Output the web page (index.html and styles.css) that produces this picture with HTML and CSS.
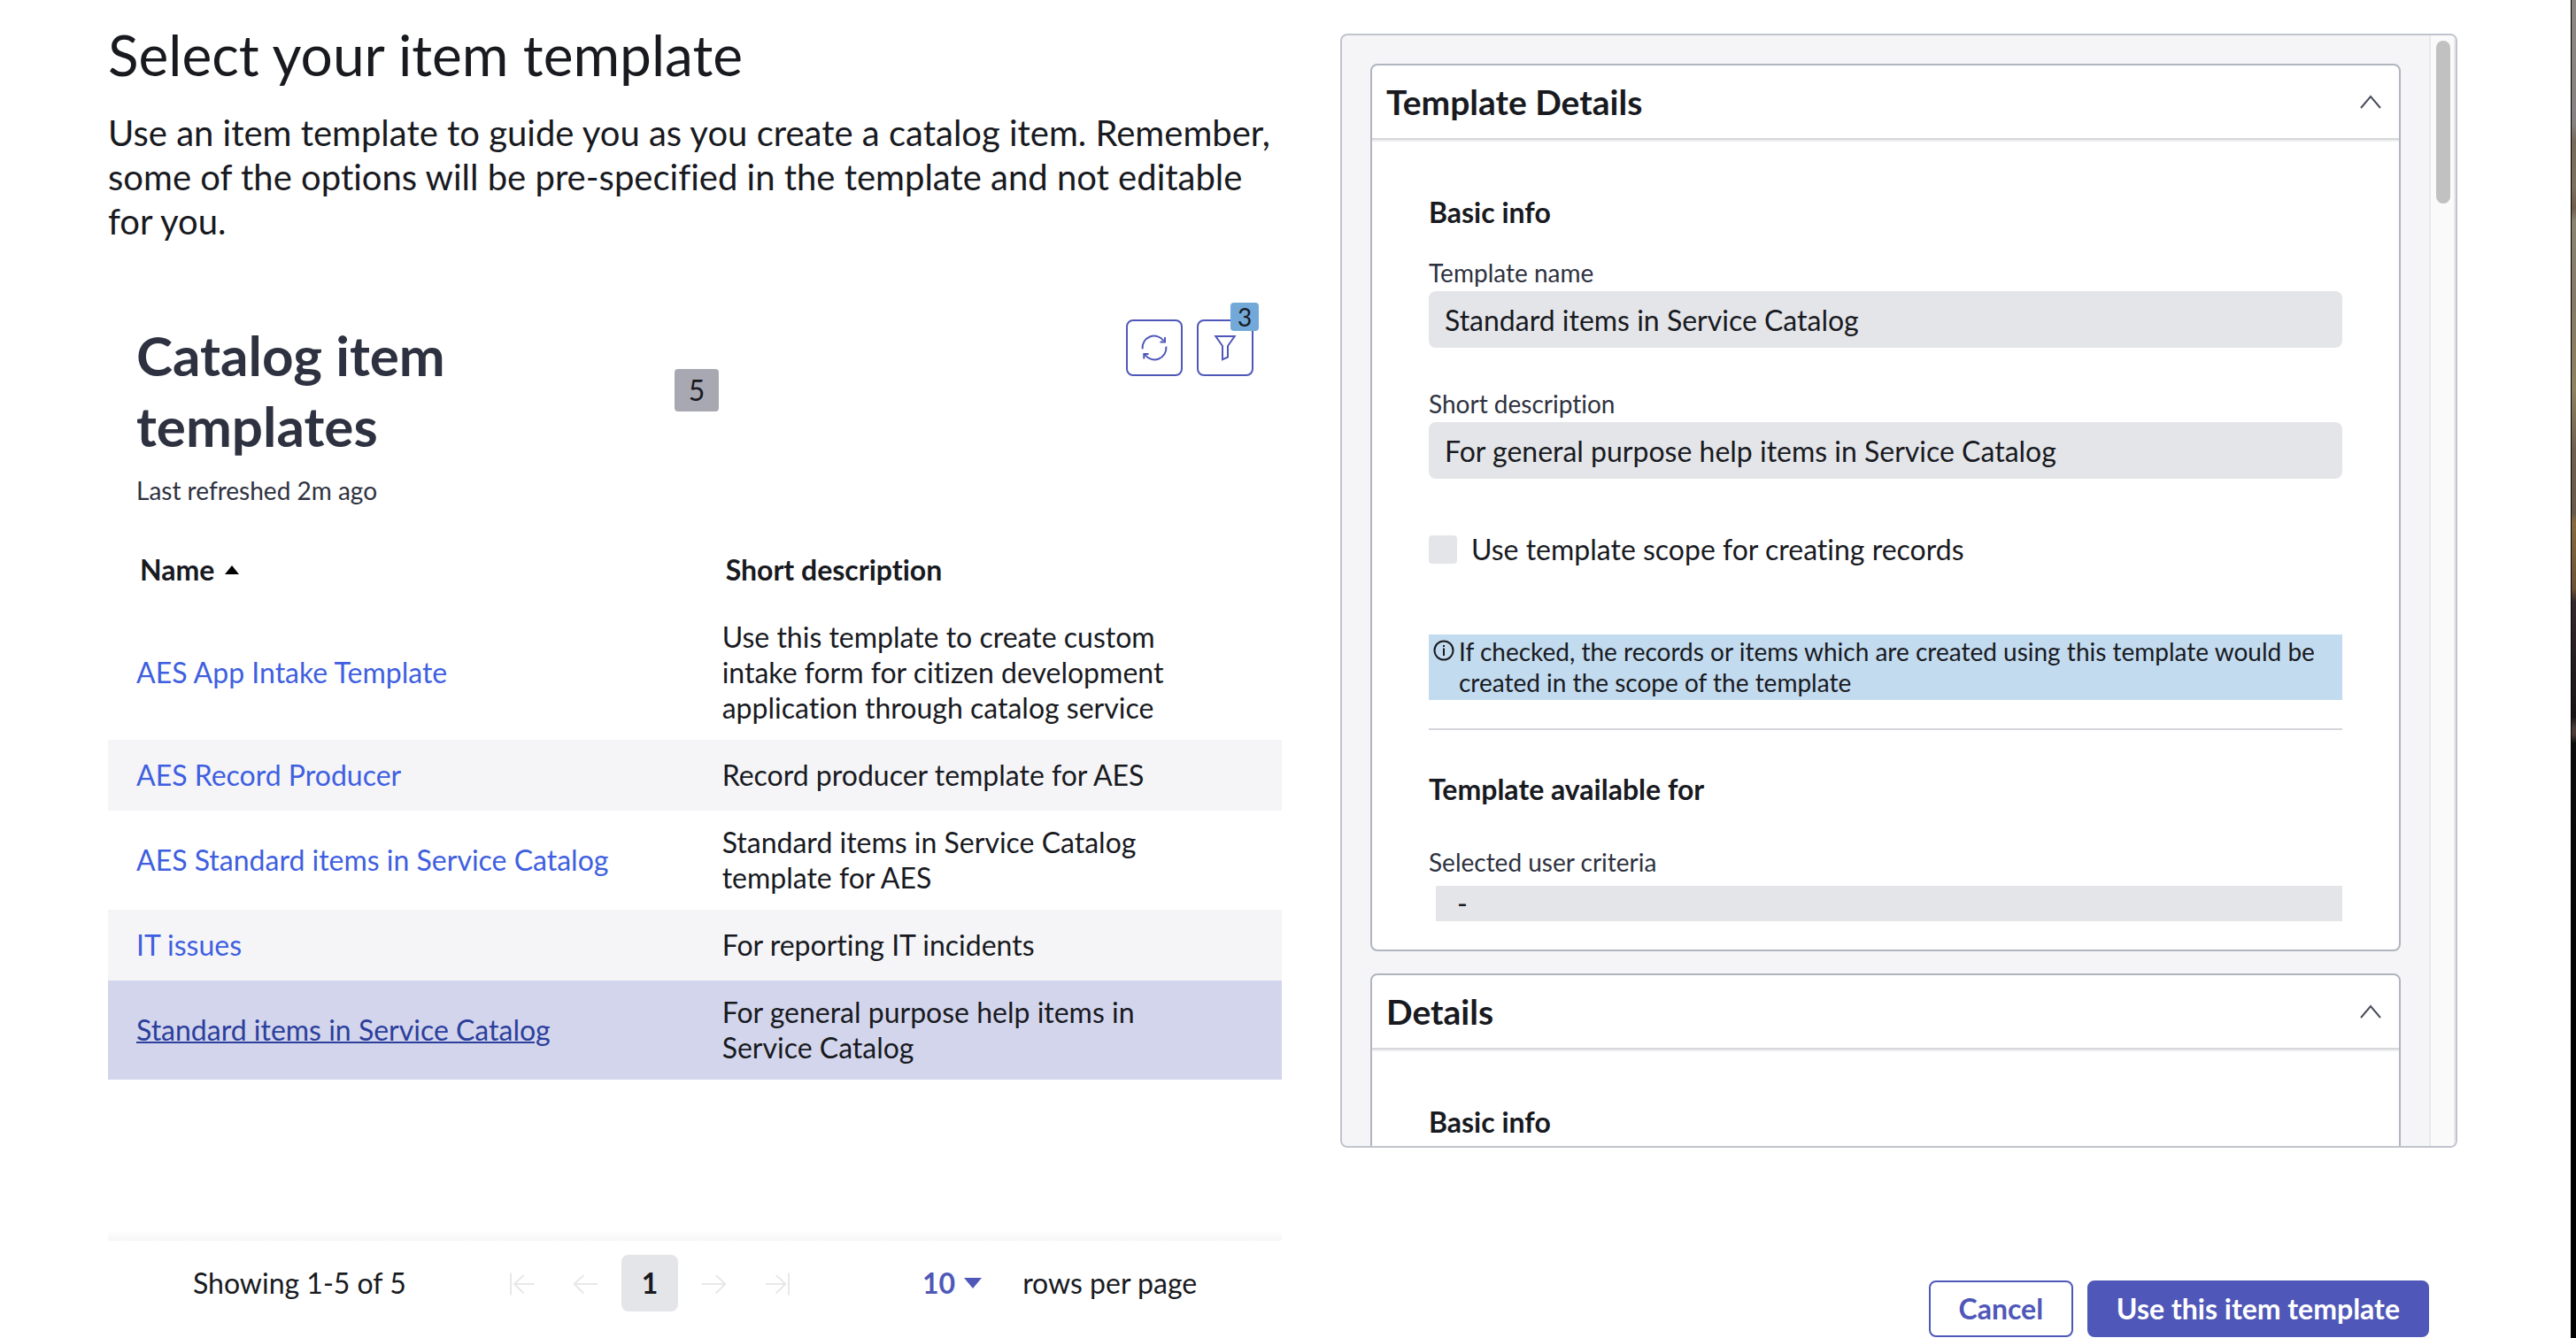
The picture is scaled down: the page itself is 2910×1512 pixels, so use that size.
FILE: index.html
```html
<!DOCTYPE html>
<html lang="en">
<head>
<meta charset="utf-8">
<title>Select your item template</title>
<link rel="stylesheet" href="styles.css">
</head>
<body>
<div class="page">
  <main class="columns">
    <section class="picker">
      <h1 class="page-title">Select your item template</h1>
      <p class="intro">Use an item template to guide you as you create a catalog item. Remember, some of the options will be pre-specified in the template and not editable for you.</p>

      <div class="list-head">
        <div class="list-heading">
          <h2 class="list-title">Catalog item templates</h2>
          <p class="refreshed">Last refreshed 2m ago</p>
        </div>
        <span class="count">5</span>
        <div class="tools">
          <button class="tool" type="button" aria-label="Refresh">
            <svg class="icon" viewBox="0 0 32 32"><path d="M2.600 17.300A13.300 13.300 0 0 1 26.500 8M28 4V9.500H22.500M29.400 14.700A13.300 13.300 0 0 1 5.500 24M4.300 28.500V23H9.500"/></svg>
          </button>
          <button class="tool" type="button" aria-label="Filter">
            <svg class="icon" viewBox="0 0 32 32"><path d="M5.300 3H26.700L19 14V26.500L13 29.300V14Z"/></svg>
            <span class="tool-badge">3</span>
          </button>
        </div>
      </div>

      <table class="templates">
        <thead>
          <tr>
            <th scope="col"><span class="sort">Name <svg class="sort-icon" viewBox="0 0 16 10"><path d="M8 0 16 10H0Z"/></svg></span></th>
            <th scope="col">Short description</th>
          </tr>
        </thead>
        <tbody>
          <tr><td><a href="#">AES App Intake Template</a></td><td>Use this template to create custom intake form for citizen development application through catalog service</td></tr>
          <tr><td><a href="#">AES Record Producer</a></td><td>Record producer template for AES</td></tr>
          <tr><td><a href="#">AES Standard items in Service Catalog</a></td><td>Standard items in Service Catalog template for AES</td></tr>
          <tr><td><a href="#">IT issues</a></td><td>For reporting IT incidents</td></tr>
          <tr class="selected"><td><a href="#">Standard items in Service Catalog</a></td><td>For general purpose help items in Service Catalog</td></tr>
        </tbody>
      </table>

      <div class="pager">
        <span class="showing">Showing 1-5 of 5</span>
        <nav class="pages" aria-label="Pages">
          <button class="page-button" type="button" disabled aria-label="First page"><svg class="icon" viewBox="0 0 32 32"><path d="M3 4.500V29.500M29.300 17H7M17.700 7 7 17 17.700 27.500"/></svg></button>
          <button class="page-button" type="button" disabled aria-label="Previous page"><svg class="icon" viewBox="0 0 32 32"><path d="M29 17H2.500M13.300 7 2.700 17 13.300 27.500"/></svg></button>
          <button class="page-button current" type="button">1</button>
          <button class="page-button" type="button" disabled aria-label="Next page"><svg class="icon" viewBox="0 0 32 32"><path d="M2.700 17H29.300M18.700 7 29.300 17 18.700 27.500"/></svg></button>
          <button class="page-button" type="button" disabled aria-label="Last page"><svg class="icon" viewBox="0 0 32 32"><path d="M29 4.500V29.500M3 17H25M14.700 7 25.300 17 14.700 27.500"/></svg></button>
        </nav>
        <div class="rows">
          <button class="rows-button" type="button">10 <svg class="rows-icon" viewBox="0 0 20 12"><path d="M0 0H20L10 12Z"/></svg></button>
          <span>rows per page</span>
        </div>
      </div>
    </section>

    <section class="side">
      <div class="preview">
        <div class="preview-content">
          <article class="card">
            <header class="card-head">
              <h2 class="card-title">Template Details</h2>
              <button class="collapse" type="button" aria-label="Collapse Template Details"><svg class="chevron" viewBox="0 0 24 16"><path d="M1 15 12 2 23 15"/></svg></button>
            </header>
            <div class="card-body">
              <h3 class="group-title">Basic info</h3>
              <div class="field">
                <label for="template-name">Template name</label>
                <input class="value" id="template-name" type="text" value="Standard items in Service Catalog" readonly>
              </div>
              <div class="field">
                <label for="short-description">Short description</label>
                <input class="value" id="short-description" type="text" value="For general purpose help items in Service Catalog" readonly>
              </div>
              <label class="check"><input class="box" type="checkbox" disabled>Use template scope for creating records</label>
              <p class="note">
                <svg class="note-icon" viewBox="0 0 24 24"><circle cx="12" cy="12" r="10.500"/><path d="M12 9.500V18M12 6V8"/></svg>
                <span>If checked, the records or items which are created using this template would be created in the scope of the template</span>
              </p>
              <hr class="rule">
              <h3 class="group-title">Template available for</h3>
              <div class="criteria">
                <span class="criteria-label">Selected user criteria</span>
                <div class="criteria-value">-</div>
              </div>
            </div>
          </article>
          <article class="card">
            <header class="card-head">
              <h2 class="card-title">Details</h2>
              <button class="collapse" type="button" aria-label="Collapse Details"><svg class="chevron" viewBox="0 0 24 16"><path d="M1 15 12 2 23 15"/></svg></button>
            </header>
            <div class="card-body">
              <h3 class="group-title">Basic info</h3>
            </div>
          </article>
        </div>
        <div class="track"><div class="thumb"></div></div>
      </div>
      <div class="actions">
        <button class="action" type="button">Cancel</button>
        <button class="action primary" type="button">Use this item template</button>
      </div>
    </section>
  </main>
  <div class="backdrop"></div>
</div>
</body>
</html>
```
FILE: styles.css
```css
* { box-sizing: border-box; }

body {
  margin: 0;
  overflow: hidden;
  background: #fff;
  color: #181a1f;
  font: 32px/40px Lato, sans-serif;
  font-variant-ligatures: none;
}

h1, h2, h3, p { margin: 0; }

button, input { font: inherit; color: inherit; font-variant-ligatures: none; }

button { padding: 0; border: 0; background: none; }

.page {
  display: flex;
  min-height: 100vh;
}

.columns {
  flex: 1;
  display: grid;
  grid-template-columns: minmax(0, 1326fr) minmax(0, 1262fr);
  column-gap: 66px;
  padding: 0 128px 0 122px;
}

.backdrop {
  width: 6px;
  border-left: 1px solid #000;
  background: linear-gradient(#8c8684 0, #868080 140px, #75695a 160px, #7c705f 210px, #6e5e4c 235px, #8a8272 250px, #857a66 340px, #8c8160 440px, #6d604f 510px, #675a4c 580px, #86693f 590px, #6b5236 665px, #33292b 680px, #171314 810px, #4a3b37 822px, #4a3b37 830px, #0b0d0d 840px, #000 1200px);
}

/* Template list */
.picker { display: flex; flex-direction: column; }

.page-title {
  padding-top: 22px;
  font-size: 64px;
  line-height: 80px;
  font-weight: 400;
}

.intro {
  padding-top: 23px;
  font-size: 40px;
  line-height: 50px;
}

.list-head {
  display: flex;
  padding: 86px 32px 0;
}

.list-heading { width: 608px; }

.list-title {
  max-width: 400px;
  color: #2e3240;
  font-size: 62px;
  line-height: 80px;
}

.refreshed {
  padding-top: 16px;
  color: #2e3240;
  font-size: 28px;
  line-height: 35px;
}

.count {
  align-self: flex-start;
  width: 50px;
  margin-top: 56px;
  border-radius: 4px;
  background: #a8a8b2;
  line-height: 48px;
  text-align: center;
}

.tools {
  display: flex;
  gap: 16px;
  margin-left: auto;
}

.tool {
  position: relative;
  width: 64px;
  height: 64px;
  border: 2px solid #4f58b8;
  border-radius: 8px;
  color: #4f58b8;
}

.icon {
  display: block;
  width: 32px;
  height: 32px;
  margin: auto;
  fill: none;
  stroke: currentColor;
  stroke-width: 2;
}

.tool-badge {
  position: absolute;
  top: -21px;
  right: -8px;
  width: 32px;
  border-radius: 4px;
  background: #72a9d9;
  color: #181a1f;
  font-size: 28px;
  line-height: 32px;
}

.templates {
  width: 100%;
  margin-top: 32px;
  border-collapse: collapse;
  table-layout: fixed;
}

.templates th, .templates td {
  height: 80px;
  padding: 16px 120px 16px 32px;
  text-align: left;
}

.templates th { padding-left: 36px; }

.templates th:first-child, .templates td:first-child {
  width: 49.9%;
  padding-right: 32px;
}

.templates tbody tr:nth-child(even) { background: #f5f5f8; }

.templates a { color: #3f5fe0; text-decoration: none; }

.templates .selected { background: #d3d5ec; }

.templates .selected a {
  color: #2b3f9c;
  text-decoration: underline;
  text-decoration-thickness: 2px;
}

.sort { display: flex; align-items: center; gap: 12px; }

.sort-icon { width: 16px; height: 10px; }

.pager {
  display: flex;
  align-items: center;
  margin-top: 170px;
  padding: 28px 0 16px 96px;
  background: linear-gradient(#fff, #f6f6f6) top / 100% 12px no-repeat;
}

.showing { width: 340px; }

.pages { display: flex; gap: 8px; }

.page-button {
  width: 64px;
  height: 64px;
  border-radius: 8px;
}

.page-button:disabled { color: #e8e8eb; }

.current { background: #e4e5e9; font-weight: 700; }

.rows {
  display: flex;
  gap: 46px;
  margin-left: 132px;
}

.rows-button {
  display: flex;
  align-items: center;
  gap: 10px;
  color: #4f58b8;
  font-weight: 700;
}

.rows-icon { width: 20px; height: 12px; fill: currentColor; }

/* Preview of the selected template */
.side {
  display: flex;
  flex-direction: column;
  padding-top: 38px;
}

.preview {
  display: flex;
  height: 1259px;
  overflow: hidden;
  border: 2px solid #c0c4cc;
  border-radius: 8px;
  background: #f5f5f8;
}

.preview-content {
  flex: 1;
  display: flex;
  flex-direction: column;
  gap: 25px;
  padding: 32px;
}

.track {
  width: 30px;
  padding: 6px;
  border: solid #e9e9e9;
  border-width: 0 2px;
  background: #fafafa;
}

.thumb {
  width: 16px;
  height: 184px;
  border-radius: 8px;
  background: #c1c1c1;
}

.card {
  border: 2px solid #b0b5bf;
  border-radius: 8px;
  background: #fff;
}

.card-head {
  display: flex;
  align-items: center;
  justify-content: space-between;
  padding: 16px 20px 16px 16px;
  border-bottom: 2px solid #d5d7da;
  box-shadow: 0 2px #ededed;
}

.card-title { font-size: 39px; line-height: 50px; }

.chevron {
  display: block;
  width: 24px;
  height: 16px;
  fill: none;
  stroke: #4a4d5c;
  stroke-width: 2;
}

.card-body { padding: 62px 64px 32px; }

.group-title { font-size: 32px; line-height: 40px; }

.field {
  display: flex;
  flex-direction: column;
  gap: 3px;
  padding-top: 31px;
}

.field + .field { padding-top: 46px; }

.field label, .criteria-label {
  color: #2e3240;
  font-size: 28px;
  line-height: 35px;
}

.value {
  width: 100%;
  height: 64px;
  padding: 0 18px;
  border: 0;
  border-radius: 8px;
  outline: 0;
  background: #e4e5e9;
}

.check {
  display: flex;
  align-items: center;
  gap: 16px;
  padding-top: 60px;
}

.box {
  appearance: none;
  width: 32px;
  height: 32px;
  margin: 0;
  border-radius: 4px;
  background: #e4e5e9;
}

.note {
  display: flex;
  gap: 5px;
  margin-top: 76px;
  padding: 2px 5px;
  background: #c3dbef;
  font-size: 28px;
  line-height: 35px;
}

.note-icon {
  flex: none;
  width: 24px;
  height: 24px;
  margin-top: 4px;
  fill: none;
  stroke: currentColor;
  stroke-width: 2;
}

.rule {
  margin: 32px 0 47px;
  border: 0;
  border-top: 2px solid #d5d7dc;
}

.criteria { padding-top: 45px; }

.criteria-label { display: block; }

.criteria-value {
  margin: 9px 0 0 8px;
  padding-left: 24px;
  background: #e4e5e9;
}

.actions {
  display: flex;
  justify-content: flex-end;
  gap: 16px;
  padding: 150px 32px 0 0;
}

.action {
  min-width: 163px;
  height: 64px;
  padding: 0 31px;
  border: 2px solid #4f58b8;
  border-radius: 8px;
  color: #4f58b8;
  font-weight: 700;
}

.primary { background: #4f58b8; color: #fff; }
```
